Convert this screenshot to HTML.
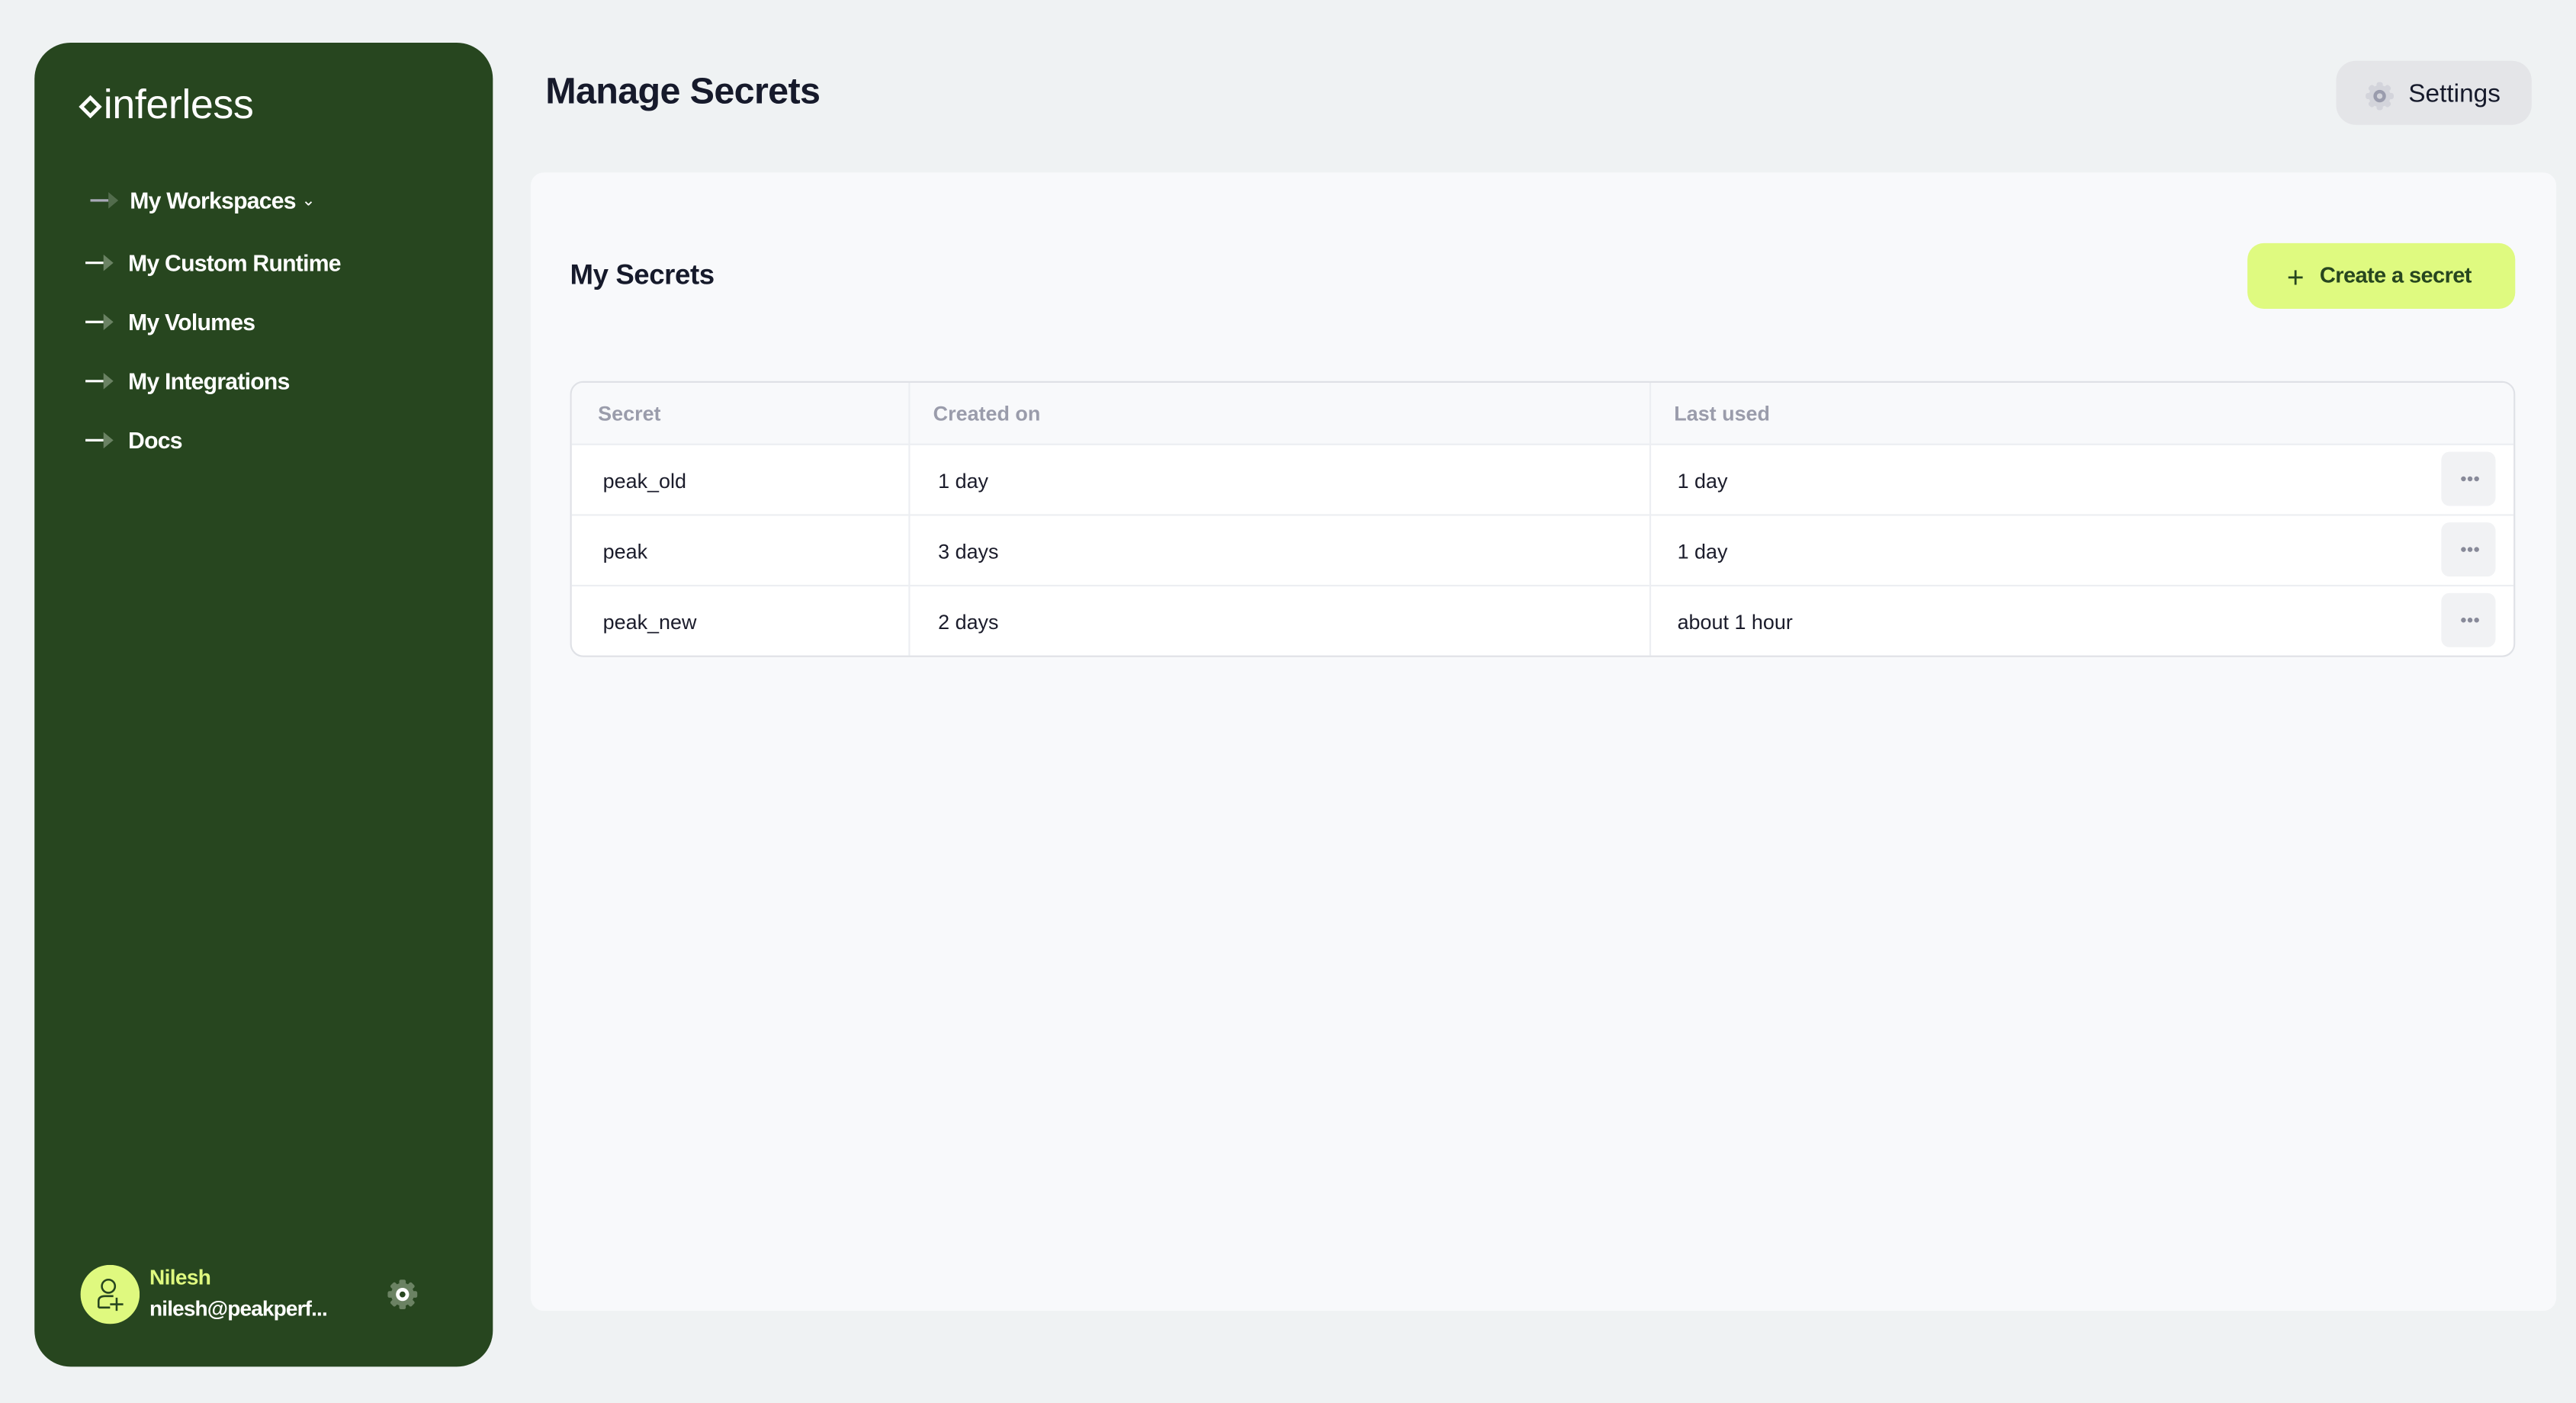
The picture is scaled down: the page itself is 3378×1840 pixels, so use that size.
<!DOCTYPE html>
<html><head><meta charset="utf-8"><style>
*{box-sizing:border-box;margin:0;padding:0}
html,body{width:3378px;height:1840px;overflow:hidden;background:#eff2f3}
#w{position:absolute;left:0;top:0;width:1568px;height:854px;transform:scale(2.15434);transform-origin:0 0;font-family:"Liberation Sans",sans-serif;background:#eff2f3}
.a{position:absolute}
.sb{left:21px;top:26px;width:279px;height:806px;background:#27461f;border-radius:22px}
.nav{position:absolute;color:#fff;font-weight:bold;font-size:14px;letter-spacing:-0.35px}
.arr{position:absolute;width:18px;height:10px}
.panel{left:323px;top:105px;width:1233px;height:693px;background:#f8f9fb;border-radius:8px}
.tbl{left:347px;top:232px;width:1184px;height:168px;border:1px solid #dfe1e6;border-radius:8px;background:#fff;overflow:hidden}
.hd{position:absolute;left:0;top:0;width:100%;height:38px;background:#f8f9fb;border-bottom:1px solid #eceef2}
.row{position:absolute;left:0;width:100%;height:43px;border-bottom:1px solid #eceef2}
.c{position:absolute;font-size:12.5px;color:#1b1c2b}
.h{position:absolute;font-size:12.5px;color:#9a9cab;font-weight:bold;top:12px}
.vl{position:absolute;top:0;bottom:0;width:1px;background:#eceef2}
.dots{position:absolute;left:1138px;width:33px;height:33px;background:#f1f2f4;border-radius:5px}
.dots i{position:absolute;top:15px;width:3px;height:3px;border-radius:50%;background:#888a99}
</style></head><body><div id="w">
<div class="a sb"></div>
<svg class="a" style="left:48px;top:58px" width="14" height="14" viewBox="0 0 14 14"><path d="M7 1.5L12.5 7L7 12.5L1.5 7Z" fill="none" stroke="#fff" stroke-width="2.2"/></svg>
<div class="a" style="left:63px;top:50px;color:#fff;font-size:25px;letter-spacing:-0.2px">inferless</div>
<svg class="arr" style="left:55px;top:117px" viewBox="0 0 18 10"><path d="M0 5H11" stroke="#a9aab8" stroke-width="1.5"/><path d="M11 0L17 5L11 10Z" fill="#526c4c"/></svg>
<div class="nav" style="left:79px;top:114px">My Workspaces <span style="font-weight:normal;font-size:10px;position:relative;top:-2px">⌄</span></div>
<svg class="arr" style="left:52px;top:155px" viewBox="0 0 18 10"><path d="M0 5H11" stroke="#fff" stroke-width="1.5"/><path d="M11 0L17 5L11 10Z" fill="#6a8263"/></svg>
<div class="nav" style="left:78px;top:152px">My Custom Runtime</div>
<svg class="arr" style="left:52px;top:191px" viewBox="0 0 18 10"><path d="M0 5H11" stroke="#fff" stroke-width="1.5"/><path d="M11 0L17 5L11 10Z" fill="#6a8263"/></svg>
<div class="nav" style="left:78px;top:188px">My Volumes</div>
<svg class="arr" style="left:52px;top:227px" viewBox="0 0 18 10"><path d="M0 5H11" stroke="#fff" stroke-width="1.5"/><path d="M11 0L17 5L11 10Z" fill="#6a8263"/></svg>
<div class="nav" style="left:78px;top:224px">My Integrations</div>
<svg class="arr" style="left:52px;top:263px" viewBox="0 0 18 10"><path d="M0 5H11" stroke="#fff" stroke-width="1.5"/><path d="M11 0L17 5L11 10Z" fill="#6a8263"/></svg>
<div class="nav" style="left:78px;top:260px">Docs</div>
<svg class="a" style="left:49px;top:770px" width="36" height="36" viewBox="0 0 36 36"><circle cx="18" cy="18" r="18" fill="#dff97f"/><circle cx="17" cy="13" r="4" fill="none" stroke="#27461f" stroke-width="1.2"/><path d="M11 26V22Q11 19 15 19H20M11 26H18M22 20V28M18 24H26" fill="none" stroke="#27461f" stroke-width="1.2"/></svg>
<div class="a" style="left:91px;top:770px;color:#dff97f;font-weight:bold;font-size:13px;letter-spacing:-0.3px">Nilesh</div>
<div class="a" style="left:91px;top:789px;color:#fff;font-weight:bold;font-size:13px;letter-spacing:-0.4px">nilesh@peakperf...</div>
<svg class="a" style="left:235px;top:778px" width="20" height="20" viewBox="0 0 20 20"><g fill="#6b8263"><circle cx="10" cy="10" r="7"/><rect x="8" y="1" width="4" height="18" rx="1"/><rect x="1" y="8" width="18" height="4" rx="1"/><rect x="8" y="1" width="4" height="18" rx="1" transform="rotate(45 10 10)"/><rect x="8" y="1" width="4" height="18" rx="1" transform="rotate(-45 10 10)"/></g><circle cx="10" cy="10" r="4" fill="#fff"/><circle cx="10" cy="10" r="1.8" fill="#27461f"/></svg>
<div class="a" style="left:332px;top:43px;font-size:22.5px;font-weight:bold;color:#161a2b;letter-spacing:-0.3px">Manage Secrets</div>
<div class="a" style="left:1422px;top:37px;width:119px;height:39px;background:#e4e5e8;border-radius:12px"></div>
<svg class="a" style="left:1439px;top:49px" width="19" height="19" viewBox="0 0 20 20"><g fill="#d3d4db"><circle cx="10" cy="10" r="7"/><rect x="8" y="1" width="4" height="18" rx="1.5"/><rect x="1" y="8" width="18" height="4" rx="1.5"/><rect x="8" y="1" width="4" height="18" rx="1.5" transform="rotate(45 10 10)"/><rect x="8" y="1" width="4" height="18" rx="1.5" transform="rotate(-45 10 10)"/></g><circle cx="10" cy="10" r="4" fill="#9a9cad"/><circle cx="10" cy="10" r="1.8" fill="#d3d4db"/></svg>
<div class="a" style="left:1466px;top:49px;font-size:15.5px;color:#161a2b">Settings</div>
<div class="a panel"></div>
<div class="a" style="left:347px;top:158px;font-size:17px;font-weight:bold;color:#161a2b;letter-spacing:-0.2px">My Secrets</div>
<div class="a" style="left:1368px;top:148px;width:163px;height:40px;background:#dffa80;border-radius:10px"></div>
<div class="a" style="left:1392px;top:159px;font-size:18px;color:#27461f;line-height:20px">+</div>
<div class="a" style="left:1412px;top:160px;font-size:13.5px;font-weight:bold;color:#27461f;letter-spacing:-0.3px">Create a secret</div>
<div class="a tbl">
<div class="hd"></div>
<div class="vl" style="left:205px"></div><div class="vl" style="left:656px"></div>
<div class="h" style="left:16px">Secret</div><div class="h" style="left:220px">Created on</div><div class="h" style="left:671px">Last used</div>
<div class="row" style="top:38px"></div><div class="row" style="top:81px"></div>
<div class="c" style="left:19px;top:53px">peak_old</div><div class="c" style="left:223px;top:53px">1 day</div><div class="c" style="left:673px;top:53px">1 day</div>
<div class="c" style="left:19px;top:96px">peak</div><div class="c" style="left:223px;top:96px">3 days</div><div class="c" style="left:673px;top:96px">1 day</div>
<div class="c" style="left:19px;top:139px">peak_new</div><div class="c" style="left:223px;top:139px">2 days</div><div class="c" style="left:673px;top:139px">about 1 hour</div>
<div class="dots" style="top:42px"><i style="left:12px"></i><i style="left:16px"></i><i style="left:20px"></i></div>
<div class="dots" style="top:85px"><i style="left:12px"></i><i style="left:16px"></i><i style="left:20px"></i></div>
<div class="dots" style="top:128px"><i style="left:12px"></i><i style="left:16px"></i><i style="left:20px"></i></div>
</div>
</div></body></html>
